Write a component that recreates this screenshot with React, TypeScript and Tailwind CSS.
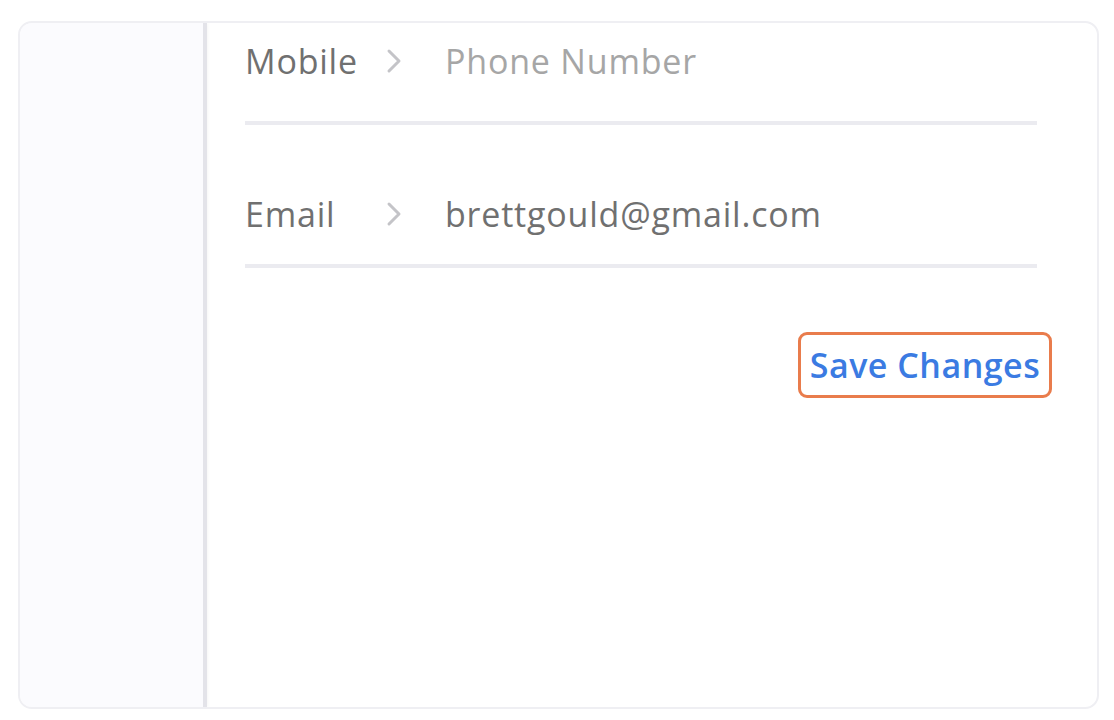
import React from 'react';

function Chevron() {
  return (
    <svg width="16" height="26" viewBox="0 0 16 26" fill="none" className="shrink-0">
      <polyline points="3,3 13,13 3,23" stroke="#c4c4c8" strokeWidth="3" strokeLinecap="round" strokeLinejoin="round" />
    </svg>
  );
}

interface FieldRowProps {
  label: string;
  value: string;
  placeholder?: boolean;
  className: string;
}

function FieldRow({ label, value, placeholder, className }: FieldRowProps) {
  return (
    <div className={`flex items-center border-b-4 border-[#ebebf0] ${className}`}>
      <span className="w-[141px] text-[34px] leading-[50px] tracking-[0.8px] text-[#707070]">{label}</span>
      <Chevron />
      <span className={`ml-[43px] text-[34px] leading-[50px] tracking-[0.8px] ${placeholder ? 'text-[#a6a6a6]' : 'text-[#707070]'}`}>
        {value}
      </span>
    </div>
  );
}

export default function App() {
  return (
    <div className="w-[1114px] h-[720px] bg-white pt-[21px] pl-[18px]" style={{ fontFamily: '"Open Sans", "Liberation Sans", sans-serif' }}>
      <div className="w-[1081px] h-[688px] flex rounded-[14px] border-2 border-[#efeff3] overflow-hidden bg-white">
        <div className="w-[187px] shrink-0 bg-[#fbfbfe] border-r-4 border-[#e3e3e9] shadow-[1px_0_3px_rgba(0,0,0,0.04)]" />
        <div className="flex-1 pl-[38px] pr-[60px]">
          <FieldRow label="Mobile" value="Phone Number" placeholder className="pt-[13px] pb-[35px]" />
          <FieldRow label="Email" value="brettgould@gmail.com" className="pt-[64px] pb-[25px]" />
          <div className="flex justify-end -mr-[15px] mt-[64px]">
            <button className="w-[254px] h-[66px] flex items-center justify-center rounded-[9px] border-[3px] border-[#e97c4c] text-[34px] font-semibold tracking-[0.5px] text-[#3b7be2] leading-none">
              Save Changes
            </button>
          </div>
        </div>
      </div>
    </div>
  );
}
